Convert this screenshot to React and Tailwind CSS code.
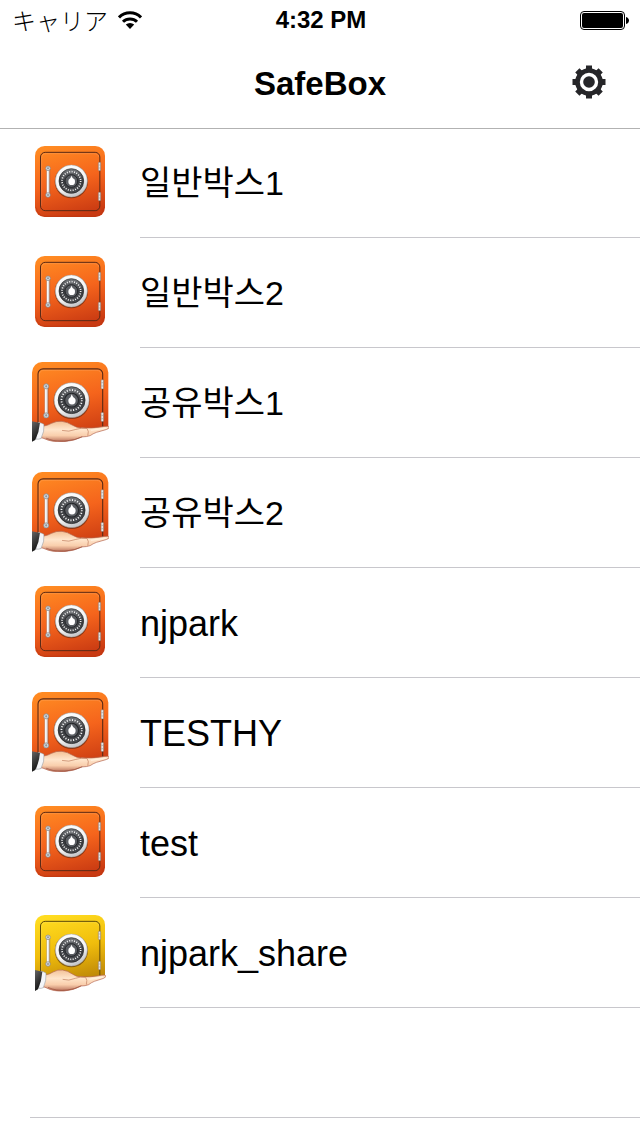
import React from 'react'

const boxes = [
  { name: '일반박스1', type: 'normal' },
  { name: '일반박스2', type: 'normal' },
  { name: '공유박스1', type: 'shared' },
  { name: '공유박스2', type: 'shared' },
  { name: 'njpark', type: 'normal' },
  { name: 'TESTHY', type: 'shared' },
  { name: 'test', type: 'normal' },
  { name: 'njpark_share', type: 'guest' },
]

const isHangul = (text) => /[가-힣]/.test(text)

function WifiIcon() {
  return (
    <svg width="24" height="18" viewBox="0 0 24 18" fill="none" stroke="#000" strokeWidth="3" aria-hidden="true">
      <path d="M1 6.4a15.6 15.6 0 0 1 22 0" />
      <path d="M5 10.8a10 10 0 0 1 14 0" />
      <path d="M7.8 13.6a6 6 0 0 1 8.4 0L12 18z" fill="#000" stroke="none" />
    </svg>
  )
}

function BatteryIcon() {
  return (
    <svg width="50" height="20" viewBox="0 0 50 20" aria-hidden="true">
      <rect x="0.5" y="1.5" width="44" height="18" rx="3.5" fill="none" stroke="#000" />
      <rect x="2" y="3" width="41" height="15" rx="2" />
      <path d="M46 7c4 1 4 6 0 7z" />
    </svg>
  )
}

function GearIcon() {
  return (
    <svg width="34" height="34" viewBox="-17 -17 34 34" fill="#262629" aria-hidden="true">
      {[0, 45, 90, 135, 180, 225, 270, 315].map((angle) => (
        <path key={angle} d="M-4.8 -11L-3 -13.6V-16.5H3V-13.6L4.8 -11z" transform={`rotate(${angle})`} />
      ))}
      <circle r="11.5" fill="none" stroke="#262629" strokeWidth="4.6" />
      <circle r="5.8" />
    </svg>
  )
}

function Safe({ id, yellow }) {
  const frame = yellow ? '#5c4a0c' : '#5a2a16'
  return (
    <>
      <defs>
        <linearGradient id={`${id}-body`} x1="0.3" y1="0" x2="0.55" y2="1">
          <stop offset="0" stopColor={yellow ? '#ffdc20' : '#ff8a22'} />
          <stop offset="0.5" stopColor={yellow ? '#f0bd0c' : '#f5641c'} />
          <stop offset="1" stopColor={yellow ? '#b98207' : '#c93a12'} />
        </linearGradient>
        <linearGradient id={`${id}-rim`} x1="0" y1="0" x2="0.5" y2="1">
          <stop offset="0" stopColor="#fff" />
          <stop offset="0.7" stopColor="#f4f4f4" />
          <stop offset="1" stopColor="#c8cacd" />
        </linearGradient>
        <linearGradient id={`${id}-dial`} x1="0" y1="0" x2="0" y2="1">
          <stop offset="0" stopColor="#75787c" />
          <stop offset="0.5" stopColor="#393b3f" />
          <stop offset="1" stopColor="#4a4c50" />
        </linearGradient>
      </defs>
      <rect x="45" y="33" width="210" height="213" rx="29" fill={`url(#${id}-body)`} />
      <path d="M49 218q3 24 26 26h150q23-2 26-26" fill="none" stroke={yellow ? '#9c6e08' : '#b83410'} strokeWidth="3" opacity="0.5" />
      <rect x="61.5" y="52" width="178" height="175" rx="14" fill="none" stroke={frame} strokeWidth="3" />
      <path d="M65 212V70q0-14 13-14h143q14 0 15 10" fill="none" stroke="#fff" strokeWidth="1.5" opacity="0.22" />
      {[82, 172].map((y) => (
        <g key={y}>
          <rect x="235" y={y} width="7" height="25" rx="2" fill="#e7e7e7" stroke="#86726a" strokeWidth="1.5" />
          <path d={`M236 ${y + 8}h5m-5 9h5`} stroke="#888" strokeWidth="1.5" />
        </g>
      ))}
      <path d="M85 104v74" stroke="#7d5242" strokeWidth="11" strokeLinecap="round" opacity="0.55" />
      <path d="M84 102v75" stroke="#d9dcdf" strokeWidth="8" />
      <path d="M83 106v68" stroke="#fff" strokeWidth="3" />
      <circle cx="84" cy="100" r="7" fill="#d5d9dd" stroke="#83878c" strokeWidth="2" />
      <circle cx="84" cy="180" r="7" fill="#d5d9dd" stroke="#83878c" strokeWidth="2" />
      <circle cx="84" cy="100" r="3" fill="#8f949b" />
      <circle cx="84" cy="180" r="3" fill="#8f949b" />
      <circle cx="154" cy="140" r="50" fill="#422013" opacity="0.55" />
      <circle cx="154" cy="138" r="48" fill={`url(#${id}-rim)`} stroke="#a8aaad" strokeWidth="1.5" />
      <circle cx="154" cy="138" r="37" fill={`url(#${id}-dial)`} stroke="#222" strokeWidth="2" />
      <circle cx="154" cy="138" r="28" fill="none" stroke="#f2f2f2" strokeWidth="5" strokeDasharray="3.1 4.23" />
      <circle cx="154" cy="138" r="19" fill="#5b5e63" stroke="#25272a" strokeWidth="3" />
      <circle cx="155" cy="140" r="10" fill="#fff" />
      <path d="M150 133l4-11 6 11z" fill="#fff" />
    </>
  )
}

function Hand({ id }) {
  return (
    <>
      <defs>
        <linearGradient id={`${id}-skin`} x1="0" y1="0" x2="0" y2="1">
          <stop offset="0" stopColor="#f3c197" />
          <stop offset="0.4" stopColor="#ffe5cb" />
          <stop offset="0.7" stopColor="#f9ceac" />
          <stop offset="1" stopColor="#b9705a" />
        </linearGradient>
        <linearGradient id={`${id}-sleeve`} x1="0" y1="0" x2="0.4" y2="1">
          <stop offset="0" stopColor="#666" />
          <stop offset="1" stopColor="#111" />
        </linearGradient>
      </defs>
      <path
        d="M75 213q14-2 24-9q14-8 29-6q15 2 29 12q14 10 26 8q28 2 48-2q14-3 24-3q7 5-4 10l-28 9q-10 4-17 10q-10 4-22 4q-24 13-52 15q-32 2-54-10q-6-3-10-2z"
        fill={`url(#${id}-skin)`}
        stroke="#b3644d"
        strokeWidth="2"
      />
      <path d="M128 226q18 6 38-3q16-6 31-3q6 8 2 22" fill="none" stroke="#c07c5e" strokeWidth="2" />
      <path d="M208 226q24-4 41-7" stroke="#fff0de" strokeWidth="4" fill="none" />
      <path d="M84 250q24 12 58 8q22-2 42-13" stroke="#934835" strokeWidth="3" fill="none" opacity="0.6" />
      <path d="M62 201q10 2 16 6q2 22-8 44q-6 3-14 2z" fill="#f4f6f9" stroke="#8b8e94" strokeWidth="1.5" />
      <path d="M45 198l22 5q-2 28-13 53l-9 5z" fill={`url(#${id}-sleeve)`} />
    </>
  )
}

function BoxIcon({ id, type }) {
  if (type === 'shared') {
    return (
      <svg width="77" height="80" viewBox="36 36 231 240" aria-hidden="true">
        <clipPath id={`${id}-clip`}>
          <path d="M36 36h231v200H36z" />
        </clipPath>
        <g clipPath={`url(#${id}-clip)`}>
          <g transform="translate(-13 0) scale(1.09)">
            <Safe id={id} />
          </g>
        </g>
        <g transform="translate(-13 22) scale(1.087 0.97)">
          <Hand id={id} />
        </g>
      </svg>
    )
  }

  if (type === 'guest') {
    return (
      <svg width="71" height="80" viewBox="45 24 213 240" aria-hidden="true">
        <clipPath id={`${id}-clip`}>
          <path d="M45 33h210v187H45z" />
        </clipPath>
        <g clipPath={`url(#${id}-clip)`}>
          <Safe id={id} yellow />
        </g>
        <Hand id={id} />
      </svg>
    )
  }

  return (
    <svg width="70" height="71" viewBox="45 33 210 213" aria-hidden="true">
      <Safe id={id} />
    </svg>
  )
}

function App() {
  return (
    <div className="min-h-screen bg-white text-black font-['Liberation_Sans','Noto_Sans_CJK_KR',sans-serif]">
      <header className="h-32 shadow-[0_1px_0_#b2b2b2]">
        <div className="grid grid-cols-3 items-center h-10 pl-3 pr-2.5">
          <div className="flex items-center gap-2.5">
            <span lang="ja" className="text-2xl font-light whitespace-nowrap font-['Noto_Sans_CJK_JP',sans-serif]">キャリア</span>
            <WifiIcon />
          </div>
          <span className="text-2xl font-bold text-center">4:32 PM</span>
          <div className="flex justify-end">
            <BatteryIcon />
          </div>
        </div>
        <div className="grid grid-cols-[1fr_auto_1fr] items-center h-22 px-8">
          <h1 className="col-start-2 text-[33px] font-bold">SafeBox</h1>
          <button type="button" aria-label="Settings" className="justify-self-end px-0.5 pb-1">
            <GearIcon />
          </button>
        </div>
      </header>

      <ul>
        {boxes.map((box, index) => (
          <li key={box.name}>
            <button type="button" className="flex w-full h-[110px] text-left">
              <span className="flex items-center justify-center w-[140px] shrink-0 pb-[3px]">
                <BoxIcon id={`box${index}`} type={box.type} />
              </span>
              <span
                className={`flex flex-1 items-center border-b border-[#c8c7cc] pt-0.5 ${
                  isHangul(box.name) ? 'text-[34px]' : 'text-4xl'
                }`}
              >
                {box.name}
              </span>
            </button>
          </li>
        ))}
      </ul>
      <div className="h-[110px] ml-[30px] border-b border-[#c8c7cc]" />
    </div>
  )
}

export default App
